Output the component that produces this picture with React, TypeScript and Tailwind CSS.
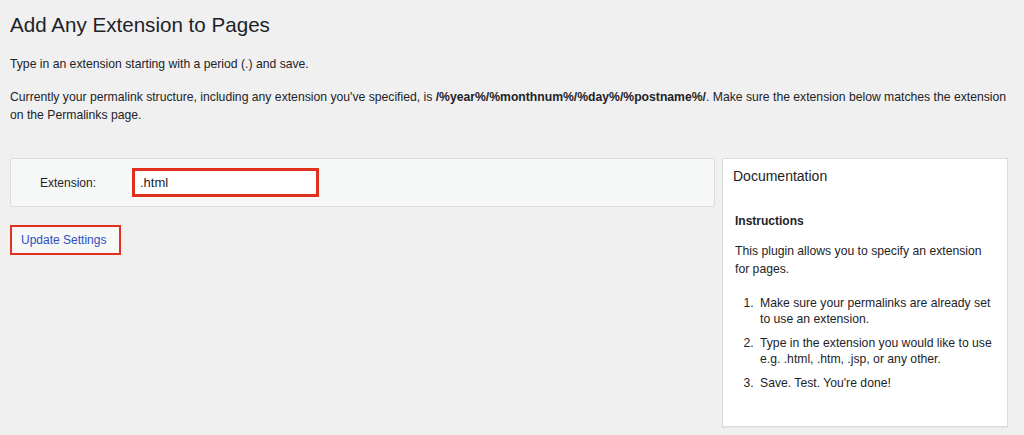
import React, { useState } from "react";

const steps = [
  "Make sure your permalinks are already set to use an extension.",
  "Type in the extension you would like to use e.g. .html, .htm, .jsp, or any other.",
  "Save. Test. You're done!",
];

const DocumentationBox = () => (
  <aside className="w-[286px] shrink-0 border border-[#dcdcde] bg-white shadow-[0_1px_1px_rgba(0,0,0,0.04)] pb-[27px]">
    <h2 className="pl-[10px] pt-[7px] text-[14px] leading-[20px] text-[#1d2327]">
      Documentation
    </h2>
    <div className="px-[12px] pt-[26px]">
      <h3 className="text-[12px] font-bold leading-[18px]">Instructions</h3>
      <p className="mt-[12px] text-[12.2px] leading-[18px]">
        This plugin allows you to specify an extension for pages.
      </p>
      <ol className="mt-[17px] list-decimal pl-[22px] text-[12.2px] leading-[16px]">
        {steps.map((step) => (
          <li key={step} className="mb-[8px] pl-[3px]">
            {step}
          </li>
        ))}
      </ol>
    </div>
  </aside>
);

const App = () => {
  const [extension, setExtension] = useState(".html");

  return (
    <div className="min-h-screen bg-[#f0f0f1] pl-[10px] pr-[16px] font-['Liberation_Sans',Arial,sans-serif] text-[#1d2327]">
      <h1 className="pt-[13px] text-[20.6px] leading-[24px]">Add Any Extension to Pages</h1>

      <p className="mt-[18px] text-[12.2px] leading-[18px]">
        Type in an extension starting with a period (.) and save.
      </p>
      <p className="mt-[15px] text-[12.2px] leading-[18px]">
        Currently your permalink structure, including any extension you've specified, is{" "}
        <strong>/%year%/%monthnum%/%day%/%postname%/</strong>. Make sure the extension below
        matches the extension on the Permalinks page.
      </p>

      <div className="mt-[34px] flex items-start gap-[7px]">
        <div className="flex-1">
          <div className="flex h-[49px] items-center rounded-[2px] border border-[#dcdcde] bg-[#f6f7f7] pl-[29px]">
            <label htmlFor="extension" className="w-[92px] text-[12px]">
              Extension:
            </label>
            <input
              id="extension"
              type="text"
              value={extension}
              onChange={(e) => setExtension(e.target.value)}
              className="h-[29px] w-[187px] border-[3px] border-[#e0301e] bg-white pl-[5px] text-[13px] text-[#1d2327] outline-none"
            />
          </div>

          <button
            type="button"
            className="mt-[18px] flex h-[30px] w-[111px] items-center border-[2px] border-[#e0301e] bg-[#f6f7f7] pl-[9px] text-[12px] text-[#2c4fc0]"
          >
            Update Settings
          </button>
        </div>

        <DocumentationBox />
      </div>
    </div>
  );
};

export default App;
